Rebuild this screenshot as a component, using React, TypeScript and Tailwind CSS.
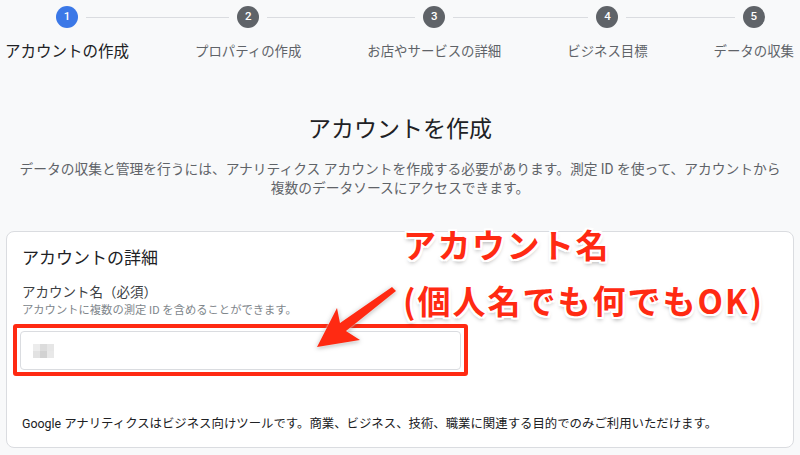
import React from 'react';

const steps = [
  { n: 1, label: 'アカウントの作成', active: true },
  { n: 2, label: 'プロパティの作成', active: false },
  { n: 3, label: 'お店やサービスの詳細', active: false },
  { n: 4, label: 'ビジネス目標', active: false },
  { n: 5, label: 'データの収集', active: false },
];

const font = { fontFamily: 'Roboto, "Noto Sans CJK JP", sans-serif' };

function Stepper() {
  return (
    <div className="flex -ml-[28px] pt-[6px]">
      {steps.map((s, i) => (
        <div key={s.n} className="flex flex-col items-stretch px-0">
          <div className="flex items-center">
            <div className={`flex-1 h-px mr-2 ${i === 0 ? 'bg-transparent' : 'bg-[#dadce0]'}`} />
            <div
              className={`w-[22px] h-[22px] rounded-full flex items-center justify-center text-white text-[11.5px] font-medium ${
                s.active ? 'bg-[#3b78e7]' : 'bg-[#5f6368]'
              }`}
            >
              {s.n}
            </div>
            <div className={`flex-1 h-px ml-2 ${i === steps.length - 1 ? 'bg-transparent' : 'bg-[#dadce0]'}`} />
          </div>
          <div
            className={`px-[33px] mt-[14px] leading-[20px] whitespace-nowrap ${
              s.active ? 'text-[15.5px] text-[#202124]' : 'text-[13.4px] text-[#5f6368]'
            }`}
          >
            {s.label}
          </div>
        </div>
      ))}
    </div>
  );
}

function BlurredValue() {
  return (
    <div className="grid grid-cols-3 w-[21px] h-[14px]">
      <div className="bg-[#ececec]" />
      <div className="bg-[#dcdcdc]" />
      <div className="bg-[#e6e6e6]" />
      <div className="bg-[#e2e2e2]" />
      <div className="bg-[#d2d2d2]" />
      <div className="bg-[#e8e8e8]" />
    </div>
  );
}

function Arrow() {
  return (
    <svg
      className="absolute left-0 top-0 pointer-events-none [filter:drop-shadow(0_0_1px_#fff)_drop-shadow(0_1px_2px_rgba(0,0,0,0.3))]"
      width="800"
      height="455"
      viewBox="0 0 800 455"
    >
      <polygon
        points="317,347 360,340 346,331 396,291 392,287 340,323 337,308"
        fill="#ff2a12"
        strokeLinejoin="round"
      />
    </svg>
  );
}

export default function App() {
  return (
    <div className="relative w-[800px] h-[455px] overflow-hidden bg-[#f8f9fa]" style={font}>
      <Stepper />

      <h1 className="mt-[52px] text-center text-[23px] leading-[32px] text-[#202124]">アカウントを作成</h1>
      <p className="mt-[14px] text-center text-[13.75px] leading-[19px] text-[#5f6368]">
        データの収集と管理を行うには、アナリティクス アカウントを作成する必要があります。測定 ID を使って、アカウントから
        <br />
        複数のデータソースにアクセスできます。
      </p>

      <div className="mt-[33px] mx-[6px] bg-white border border-[#dadce0] rounded-lg px-[15px] pt-[14px] pb-[14px]">
        <div className="text-[17px] leading-[24px] text-[#202124]">アカウントの詳細</div>
        <div className="mt-[13px] text-[13.5px] leading-[18px] text-[#3c4043]">アカウント名（必須）</div>
        <div className="mt-[2px] text-[11.3px] leading-[15px] text-[#80868b]">アカウントに複数の測定 ID を含めることができます。</div>
        <div className="mt-[6px] -ml-[9px] w-[455px] border-4 border-[#ff2a12] rounded-[3px] pt-[3px] pb-[2px] px-[3px]">
          <div className="h-[39px] bg-white border border-[#dadce0] rounded-sm flex items-center pl-[12px]">
            <BlurredValue />
          </div>
        </div>
        <div className="mt-[39px] text-[12.4px] leading-[18px] text-[#202124]">
          Google アナリティクスはビジネス向けツールです。商業、ビジネス、技術、職業に関連する目的でのみご利用いただけます。
        </div>
      </div>

      <Arrow />

      <div
        className="absolute left-[403px] top-[224px] font-bold text-[#ff2a12] text-[33px] whitespace-nowrap [text-shadow:-2px_-2px_0_#fff,2px_-2px_0_#fff,-2px_2px_0_#fff,2px_2px_0_#fff,0_2px_0_#fff,0_-2px_0_#fff,2px_0_0_#fff,-2px_0_0_#fff,0_3px_4px_rgba(0,0,0,0.35)]"
        style={{ fontFamily: '"Noto Sans CJK JP", sans-serif' }}
      >
        <div className="leading-[40px] tracking-[1.5px]">アカウント名</div>
        <div className="mt-[16px] leading-[40px] tracking-[2px]">(個人名でも何でもOK)</div>
      </div>
    </div>
  );
}
